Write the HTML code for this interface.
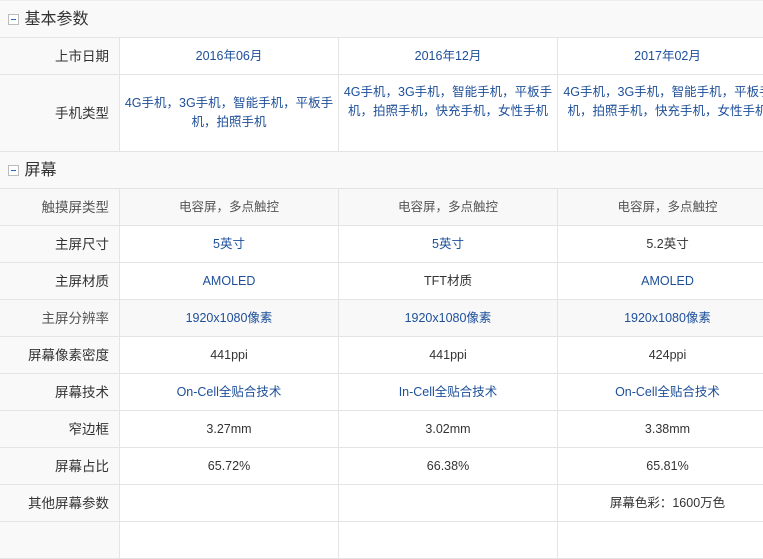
<!DOCTYPE html>
<html><head><meta charset="utf-8"><style>
*{margin:0;padding:0;box-sizing:border-box}
body{width:763px;height:528px;overflow:hidden;background:#fff;font-family:"Liberation Sans","Noto Sans CJK SC",sans-serif;font-size:12.5px;color:#333}
table{border-collapse:collapse;width:778px;table-layout:fixed;position:absolute;left:-1px;top:0}
td{border:1px solid #e4e4e4;text-align:center;height:37px;padding:0 2px;line-height:19px}
td.l{text-align:right;padding-right:10px;font-size:13.5px;background:#f9f9f9;color:#333}
tr.g td{background:#f8f8f8;color:#555}
tr.g td.l{color:#555}
tr td.b,tr.g td.b{color:#1d4f9a}
.h td{text-align:left;background:#f9f9f9;font-size:16px;padding-left:8px;border-left:none;border-right:none}
.box{display:inline-block;width:11px;height:11px;border:1px solid #bbb;position:relative;vertical-align:-1px;margin-right:6px;background:#fff}
.box:after{content:"";position:absolute;left:2px;right:2px;top:4px;height:1px;background:#2a6bc2}
</style></head><body>
<table>
<colgroup><col style="width:120px"><col style="width:219px"><col style="width:219px"><col style="width:220px"></colgroup>
<tr class="h"><td colspan="4" style="border-top-color:#eee"><span class="box"></span>基本参数</td></tr>
<tr><td class="l">上市日期</td><td class="b">2016年06月</td><td class="b">2016年12月</td><td class="b">2017年02月</td></tr>
<tr style="height:77px"><td class="l" style="height:77px">手机类型</td><td class="b">4G手机，3G手机，智能手机，平板手机，拍照手机</td><td class="b" style="vertical-align:top;padding-top:8px">4G手机，3G手机，智能手机，平板手机，拍照手机，快充手机，女性手机</td><td class="b" style="vertical-align:top;padding-top:8px">4G手机，3G手机，智能手机，平板手机，拍照手机，快充手机，女性手机</td></tr>
<tr class="h"><td colspan="4"><span class="box"></span>屏幕</td></tr>
<tr class="g"><td class="l">触摸屏类型</td><td>电容屏，多点触控</td><td>电容屏，多点触控</td><td>电容屏，多点触控</td></tr>
<tr><td class="l">主屏尺寸</td><td class="b">5英寸</td><td class="b">5英寸</td><td>5.2英寸</td></tr>
<tr><td class="l">主屏材质</td><td class="b">AMOLED</td><td>TFT材质</td><td class="b">AMOLED</td></tr>
<tr class="g"><td class="l">主屏分辨率</td><td class="b">1920x1080像素</td><td class="b">1920x1080像素</td><td class="b">1920x1080像素</td></tr>
<tr><td class="l">屏幕像素密度</td><td>441ppi</td><td>441ppi</td><td>424ppi</td></tr>
<tr><td class="l">屏幕技术</td><td class="b">On-Cell全贴合技术</td><td class="b">In-Cell全贴合技术</td><td class="b">On-Cell全贴合技术</td></tr>
<tr><td class="l">窄边框</td><td>3.27mm</td><td>3.02mm</td><td>3.38mm</td></tr>
<tr><td class="l">屏幕占比</td><td>65.72%</td><td>66.38%</td><td>65.81%</td></tr>
<tr><td class="l">其他屏幕参数</td><td></td><td></td><td>屏幕色彩：1600万色</td></tr>
<tr><td class="l" style="height:10px"></td><td style="height:10px"></td><td></td><td></td></tr>
</table>
</body></html>
